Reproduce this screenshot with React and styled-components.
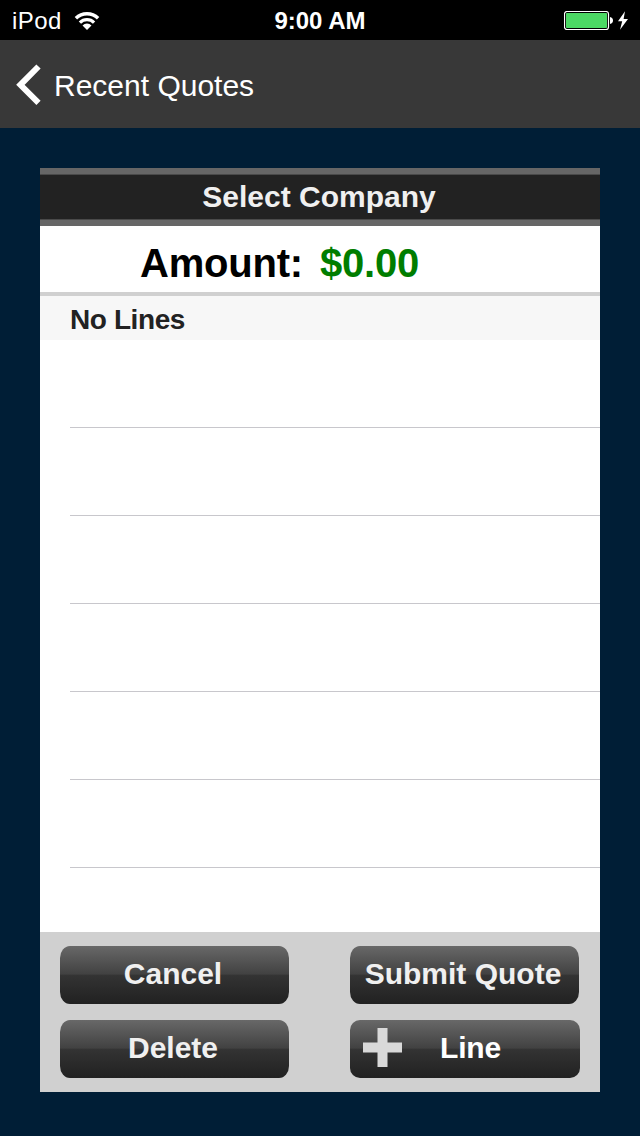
import React from 'react';
import styled, { createGlobalStyle } from 'styled-components';

const GlobalStyle = createGlobalStyle`
  * {
    box-sizing: border-box;
  }

  body {
    margin: 0;
    background: #001e36;
    font-family: 'Liberation Sans', Arial, sans-serif;
  }
`;

const Screen = styled.div`
  width: 640px;
  height: 1136px;
  display: flex;
  flex-direction: column;
  background: #001e36;
  overflow: hidden;
`;

const StatusBar = styled.div`
  height: 40px;
  flex-shrink: 0;
  display: grid;
  grid-template-columns: 1fr auto 1fr;
  align-items: center;
  padding: 1px 12px 0;
  background: #000;
  color: #fff;
  font-size: 24px;
  line-height: 40px;
`;

const Carrier = styled.div`
  display: flex;
  align-items: center;
  gap: 12px;
  letter-spacing: 0.4px;
`;

const Time = styled.div`
  font-weight: bold;
`;

const Power = styled.div`
  display: flex;
  justify-content: flex-end;
  align-items: center;
`;

const NavBar = styled.header`
  height: 88px;
  flex-shrink: 0;
  display: flex;
  align-items: center;
  gap: 12px;
  padding: 1px 16px 0;
  background: #383838;
  color: #fff;
`;

const BackLabel = styled.span`
  padding-top: 2px;
  font-size: 30px;
  line-height: 34px;
`;

const Panel = styled.main`
  width: 560px;
  height: 924px;
  margin: 40px auto 0;
  display: flex;
  flex-direction: column;
  background: #fff;
`;

const CompanyButton = styled.button`
  height: 58px;
  flex-shrink: 0;
  padding: 0 2px 0 0;
  border: solid #666;
  border-width: 6px 0;
  background: #222;
  box-shadow: inset 0 1px #4a4a4a, inset 0 -1px #4a4a4a;
  color: #f0f0f0;
  font: bold 30px/46px 'Liberation Sans', Arial, sans-serif;
`;

const AmountRow = styled.div`
  height: 70px;
  flex-shrink: 0;
  display: flex;
  gap: 17px;
  padding-left: 100px;
  border-bottom: 4px solid #d0d0d0;
  color: #000;
  font-size: 40px;
  font-weight: bold;
  line-height: 74px;
  letter-spacing: -0.2px;
`;

const Amount = styled.span`
  color: #007d00;
`;

const SectionHeader = styled.div`
  height: 44px;
  flex-shrink: 0;
  padding-left: 30px;
  background: #f7f7f7;
  color: #222;
  font-size: 28px;
  font-weight: bold;
  line-height: 47px;
  letter-spacing: -0.4px;
`;

const Lines = styled.div`
  flex: 1;
  padding-left: 30px;
`;

const LineRow = styled.div`
  height: 88px;
  border-bottom: 1px solid #c8c7cc;
`;

const Footer = styled.footer`
  height: 160px;
  flex-shrink: 0;
  display: grid;
  grid-template-columns: 230px 230px;
  grid-auto-rows: 58px;
  gap: 16px 60px;
  padding: 14px 20px;
  background: #d0d0d0;
`;

const Button = styled.button`
  display: flex;
  align-items: center;
  justify-content: center;
  margin: 0 ${({ $wide }) => ($wide ? '0' : '1px')} 0 0;
  padding: 0 3px 2px 0;
  border: none;
  border-radius: ${({ $wide }) => ($wide ? '10px' : '10px / 12px')};
  background: linear-gradient(#686868, #424242 48%, #333 51%, #212121);
  color: ${({ $wide }) => ($wide ? '#fff' : '#f0f0f0')};
  font: bold 30px/34px 'Liberation Sans', Arial, sans-serif;
  white-space: nowrap;
`;

const LineButton = styled(Button)`
  justify-content: flex-start;
  gap: 38px;
  padding-left: 13px;
  letter-spacing: -0.2px;
`;

const PlusIcon = styled.svg`
  margin-bottom: 1px;
`;

const WifiIcon = () => (
  <svg width="26" height="20" viewBox="0 0 26 20">
    <path d="M1.900 7.200a16 16 0 0 1 22.200 0" fill="none" stroke="#fff" strokeWidth="3.500" />
    <path d="M5.900 11.600a10.100 10.100 0 0 1 14.200 0" fill="none" stroke="#fff" strokeWidth="3.300" />
    <path d="M8.500 14.500a6.300 6.300 0 0 1 9 0L13 19z" fill="#fff" />
  </svg>
);

const BatteryIcon = () => (
  <svg width="64" height="20" viewBox="0 0 64 20">
    <rect x="0.5" y="0.5" width="44" height="18" rx="2.5" fill="none" stroke="#fff" strokeWidth="1.200" />
    <rect x="2" y="2" width="41" height="15" rx="0.800" fill="#4cd964" />
    <path d="M46 6c2 .3 3 1.700 3 3.500s-1 3.200-3 3.500z" fill="#fff" />
    <path d="M61 0.300L54 10.200h4.200L56 18.800 64 8h-4.400z" fill="#fff" />
  </svg>
);

const BackIcon = () => (
  <svg width="26" height="42" viewBox="0 0 26 42">
    <path d="M22.500 2.500L4.400 20.800l18.100 18" fill="none" stroke="#fff" strokeWidth="6" />
  </svg>
);

const App = () => {
  const emptyRows = [1, 2, 3, 4, 5, 6];

  return (
    <>
      <GlobalStyle />
      <Screen>
        <StatusBar>
          <Carrier>
            iPod
            <WifiIcon />
          </Carrier>
          <Time>9:00 AM</Time>
          <Power>
            <BatteryIcon />
          </Power>
        </StatusBar>
        <NavBar>
          <BackIcon />
          <BackLabel>Recent Quotes</BackLabel>
        </NavBar>
        <Panel>
          <CompanyButton>Select Company</CompanyButton>
          <AmountRow>
            <span>Amount:</span>
            <Amount>$0.00</Amount>
          </AmountRow>
          <SectionHeader>No Lines</SectionHeader>
          <Lines>
            {emptyRows.map((row) => (
              <LineRow key={row} />
            ))}
          </Lines>
          <Footer>
            <Button>Cancel</Button>
            <Button>Submit Quote</Button>
            <Button>Delete</Button>
            <LineButton $wide>
              <PlusIcon width="39" height="39" viewBox="0 0 39 39">
                <path d="M14.500 0h10v14.500H39v10H24.500V39h-10V24.500H0v-10h14.500z" fill="#d9d9d9" />
              </PlusIcon>
              Line
            </LineButton>
          </Footer>
        </Panel>
      </Screen>
    </>
  );
};

export default App;
